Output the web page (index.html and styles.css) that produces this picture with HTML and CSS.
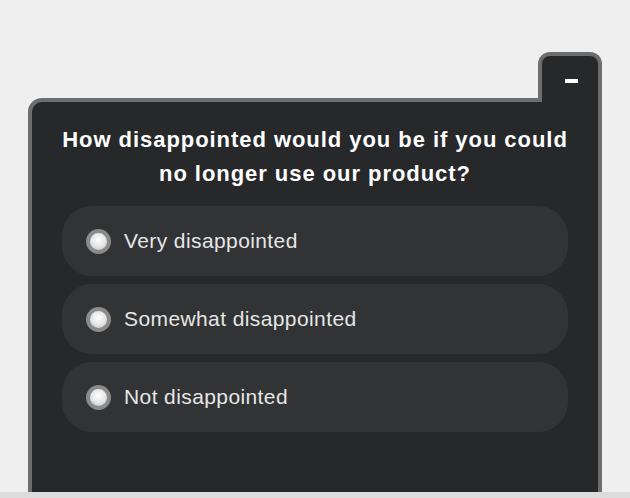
FILE: index.html
```html
<!DOCTYPE html>
<html lang="en">
<head>
    <meta charset="UTF-8">
    <title>Survey</title>
    <link rel="stylesheet" href="styles.css">
</head>
<body>

<div class="widget">
    <div class="tab-row">
        <div class="tab"><span class="minimize"></span></div>
    </div>
    <div class="panel">
        <h2 class="question">How disappointed would you be if you could no longer use our product?</h2>
        <div class="options">
            <label class="option"><span class="radio"></span>Very disappointed</label>
            <label class="option"><span class="radio"></span>Somewhat disappointed</label>
            <label class="option"><span class="radio"></span>Not disappointed</label>
        </div>
    </div>
</div>

<div class="bottom-strip"></div>

</body>
</html>
```
FILE: styles.css
```css
body {
    margin: 0;
    background-color: #efefef;
    font-family: "Liberation Sans", Arial, sans-serif;
    overflow: hidden;
}
.widget {
    width: 574px;
    margin: 52px 0 0 28px;
}
.tab-row {
    display: flex;
    justify-content: flex-end;
}
.tab {
    position: relative;
    z-index: 1;
    box-sizing: border-box;
    width: 64px;
    height: 50px;
    margin-bottom: -4px;
    background-color: #27282a;
    border: 4px solid #6d6d6d;
    border-bottom: none;
    border-radius: 12px 12px 0 0;
    display: flex;
    justify-content: center;
    padding-top: 23px;
}
.minimize {
    display: block;
    width: 13px;
    height: 4px;
    background-color: #fff;
    margin-left: 2px;
}
.panel {
    background-color: #27282a;
    border: 4px solid #6d6d6d;
    border-radius: 14px 0 0 0;
    padding: 21px 30px 0 30px;
    min-height: 500px;
}
.question {
    margin: 0 0 15px 0;
    color: #fff;
    font-size: 22px;
    font-weight: bold;
    line-height: 34px;
    letter-spacing: 0.95px;
    text-align: center;
}
.options {
    display: flex;
    flex-direction: column;
    gap: 8px;
}
.option {
    display: flex;
    align-items: center;
    height: 70px;
    padding-left: 24px;
    background-color: #323335;
    border-radius: 30px;
    color: #e6e6e6;
    font-size: 21px;
    letter-spacing: 0.4px;
}
.radio {
    box-sizing: border-box;
    width: 25px;
    height: 25px;
    margin-right: 13px;
    border-radius: 50%;
    border: 4px solid #8b8b8b;
    background: radial-gradient(circle at 50% 40%, #ffffff 0%, #e4e4e4 55%, #b9b9b9 100%);
}
.bottom-strip {
    position: fixed;
    left: 0;
    right: 0;
    bottom: 0;
    height: 6px;
    background-color: #dcdcdc;
}
```
